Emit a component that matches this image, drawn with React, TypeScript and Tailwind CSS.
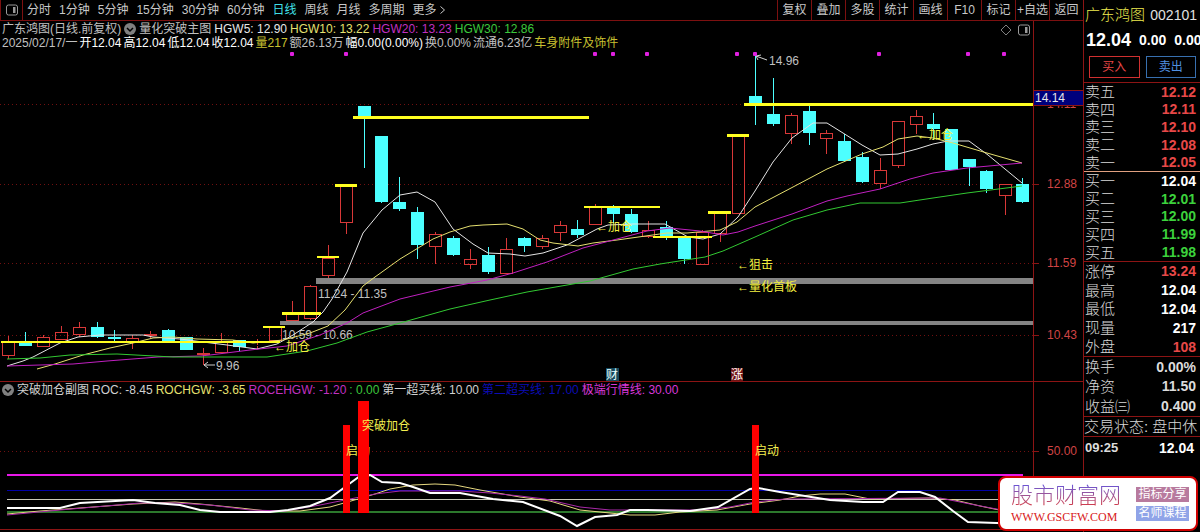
import { clsx } from "clsx";

// x, high, body top, body bottom, low, rising
type Candle = [number, number, number, number, number, boolean];

const candles: Candle[] = [
    [8, 336, 342, 356, 359, true],
    [25, 332, 342, 346, 346, false],
    [43, 335, 337, 347, 347, true],
    [61, 326, 332, 340, 340, true],
    [79, 322, 327, 335, 337, true],
    [97, 322, 327, 337, 338, false],
    [114, 330, 337, 339, 341, false],
    [132, 335, 338, 343, 349, true],
    [150, 331, 334, 336, 339, true],
    [168, 329, 330, 341, 341, false],
    [186, 337, 337, 350, 350, false],
    [203, 348, 353, 355, 365, true],
    [221, 333, 342, 353, 353, true],
    [239, 340, 340, 347, 351, false],
    [257, 339, 345, 346, 349, true],
    [275, 327, 327, 341, 341, true],
    [292, 301, 313, 321, 321, true],
    [310, 285, 286, 319, 320, true],
    [328, 245, 258, 276, 278, true],
    [346, 186, 186, 223, 234, true],
    [364, 106, 106, 116, 168, false],
    [381, 136, 136, 202, 203, false],
    [399, 177, 202, 209, 211, false],
    [417, 207, 212, 245, 259, false],
    [435, 232, 234, 247, 264, true],
    [453, 236, 238, 255, 256, false],
    [470, 249, 259, 265, 269, true],
    [488, 247, 255, 272, 274, false],
    [506, 238, 249, 274, 274, true],
    [524, 237, 238, 246, 252, false],
    [542, 235, 238, 247, 249, true],
    [560, 221, 225, 233, 241, true],
    [577, 220, 229, 235, 238, false],
    [595, 204, 207, 225, 225, true],
    [613, 205, 207, 214, 223, false],
    [631, 209, 214, 232, 233, false],
    [648, 221, 230, 237, 238, true],
    [666, 221, 227, 237, 240, false],
    [684, 238, 238, 259, 264, false],
    [702, 230, 232, 265, 265, true],
    [720, 213, 213, 234, 242, true],
    [738, 136, 136, 214, 214, true],
    [755, 55, 96, 103, 125, false],
    [773, 78, 114, 124, 126, false],
    [791, 113, 115, 134, 144, true],
    [809, 105, 111, 133, 145, false],
    [826, 130, 133, 139, 154, true],
    [844, 134, 141, 161, 161, false],
    [862, 152, 157, 182, 183, false],
    [880, 158, 170, 184, 189, true],
    [898, 121, 121, 166, 168, true],
    [916, 110, 116, 125, 134, true],
    [933, 113, 124, 129, 140, false],
    [951, 129, 129, 170, 170, false],
    [969, 159, 159, 167, 186, false],
    [986, 170, 171, 189, 193, false],
    [1005, 184, 184, 196, 215, true],
    [1022, 178, 184, 202, 203, false],
];

// x1, x2, y, thickness
const levels = [
    [1, 280, 341, 2],
    [263, 285, 326, 2],
    [282, 321, 312, 3],
    [317, 339, 256, 2],
    [335, 357, 184, 3],
    [353, 589, 116, 3],
    [584, 660, 206, 2],
    [653, 712, 236, 2],
    [708, 731, 211, 3],
    [727, 749, 134, 3],
    [744, 1033, 103, 3],
];

const averages = [
    {
        stroke: "#e4e4e4",
        points: "7,366 23,361 33,357 60,343 78,337 100,335 143,335 153,337 180,339 203,342 227,345 257,349 277,344 293,335 313,322 323,312 332,299 347,272 363,233 382,210 400,195 417,192 435,202 453,229 473,244 488,253 510,254 525,256 543,253 567,245 597,229 608,225 633,224 665,224 688,237 703,239 720,234 738,217 755,191 773,162 792,138 813,123 827,123 843,133 862,145 880,155 898,154 917,149 933,144 948,141 969,141 988,155 1022,183",
    },
    {
        stroke: "#e6e070",
        points: "37,369 55,364 83,355 110,348 133,343 153,338 173,337 197,339 233,340 253,343 283,340 310,333 328,326 345,310 363,286 375,277 400,259 433,239 450,232 470,226 483,225 507,224 523,229 540,240 553,243 578,246 593,243 617,240 667,233 687,233 720,230 737,222 755,207 793,187 827,169 862,154 883,147 898,139 917,136 933,138 953,143 987,153 1022,163",
    },
    {
        stroke: "#c020c0",
        points: "7,366 73,364 107,361 158,357 200,356 210,355 250,350 287,346 320,335 347,323 363,313 400,299 450,287 487,280 513,273 547,262 583,248 617,239 647,231 670,228 700,231 723,235 738,232 755,226 792,214 827,201 847,196 880,189 910,179 933,173 967,168 1000,165 1022,163",
    },
    {
        stroke: "#32c832",
        points: "7,359 40,358 70,355 117,354 173,357 267,357 307,351 337,343 367,332 400,323 450,309 490,300 527,292 590,281 633,269 660,264 705,257 723,251 755,237 793,220 827,210 860,203 900,203 933,198 967,193 1022,186",
    },
];

const signals = [
    { x: 274, y: 351, text: "←加仓" },
    { x: 596, y: 231, text: "←加仓" },
    { x: 917, y: 139, text: "←加仓" },
    { x: 737, y: 269, text: "←狙击" },
    { x: 737, y: 291, text: "←量化首板" },
];

const priceTicks = [
    { y: 104, label: "14.11" },
    { y: 184, label: "12.88" },
    { y: 263, label: "11.59" },
    { y: 335, label: "10.43" },
];

const dots = [292, 346, 595, 613, 647, 737, 755, 879, 968, 1004];

const periods = ["分时", "1分钟", "5分钟", "15分钟", "30分钟", "60分钟", "日线", "周线", "月线", "多周期"];
const tools = ["复权", "叠加", "多股", "统计", "画线", "F10", "标记", "+自选", "返回"];

const red = "text-[#e84848]";
const green = "text-[#3cd23c]";
const white = "text-white";
const silver = "text-[#dcdcdc]";

const asks = [
    ["卖五", "12.12", red],
    ["卖四", "12.11", red],
    ["卖三", "12.10", red],
    ["卖二", "12.08", red],
    ["卖一", "12.05", red],
];

const bids = [
    ["买一", "12.04", white],
    ["买二", "12.01", green],
    ["买三", "12.00", green],
    ["买四", "11.99", green],
    ["买五", "11.98", green],
];

const stats = [
    ["涨停", "13.24", red],
    ["最高", "12.04", white],
    ["最低", "12.04", white],
    ["现量", "217", white],
    ["外盘", "108", red],
];

const finance = [
    ["换手", "0.00%", silver],
    ["净资", "11.50", silver],
    ["收益㈢", "0.400", silver],
];

function PanelIcon() {
    return (
        <svg className="size-3 shrink-0" viewBox="0 0 12 12" fill="none" stroke="#9a9a9a">
            <rect x="0.5" y="1" width="11" height="10" rx="2" />
            <rect x="7" y="3" width="2.5" height="6" fill="#9a9a9a" stroke="none" />
        </svg>
    );
}

function CollapseIcon() {
    return (
        <svg className="size-3 shrink-0" viewBox="0 0 12 12" fill="none">
            <circle cx="6" cy="6" r="6" fill="#808080" />
            <path d="M3 5l3 3 3-3" stroke="#000" strokeWidth="1.5" />
        </svg>
    );
}

function Toolbar() {
    return (
        <nav className="flex h-[21px] items-stretch justify-between border-b border-[#7c1010] text-[#c8c8c8]">
            <div className="flex items-center gap-2">
                <button aria-label="侧栏" className="-mr-1 flex h-full w-[23px] items-center justify-center border-x border-[#7c1010]">
                    <PanelIcon />
                </button>
                {periods.map((period) => (
                    <button key={period} className={clsx("whitespace-nowrap", period === "日线" && "text-[#40e0e8]")}>
                        {period}
                    </button>
                ))}
                <button className="flex items-center gap-[3px] whitespace-nowrap">
                    更多
                    <svg className="h-2 w-[5px]" viewBox="0 0 5 8" fill="none" stroke="currentColor">
                        <path d="M0.5 0.5L4.5 4L0.5 7.5" />
                    </svg>
                </button>
            </div>
            <div className="flex">
                {tools.map((tool) => (
                    <button key={tool} className="w-[34px] whitespace-nowrap border-l border-[#7c1010]">
                        {tool}
                    </button>
                ))}
            </div>
        </nav>
    );
}

function ChartHeader() {
    return (
        <header className="grid grid-cols-[1033fr_50fr]">
            <div className="flex items-start justify-between pt-px">
                <div className="whitespace-nowrap pl-[2px] leading-[14px] text-[#c0c0c0]">
                    <h1 className="flex items-center gap-[3px]">
                        <span>广东鸿图(日线.前复权)</span>
                        <CollapseIcon />
                        <span>量化突破主图</span>
                        <span className="text-[#e8e8e8]">HGW5: 12.90</span>
                        <span className="text-[#e6e070]">HGW10: 13.22</span>
                        <span className="text-[#c030c0]">HGW20: 13.23</span>
                        <span className="text-[#3cc83c]">HGW30: 12.86</span>
                    </h1>
                    <p className="flex gap-[2px]">
                        <span>2025/02/17/一</span>
                        <span className="text-white">开12.04</span>
                        <span className="text-white">高12.04</span>
                        <span className="text-white">低12.04</span>
                        <span className="text-white">收12.04</span>
                        <span className="text-[#c8c030]">量217</span>
                        <span>额26.13万</span>
                        <span className="text-white">幅0.00(0.00%)</span>
                        <span>换0.00%</span>
                        <span>流通6.23亿</span>
                        <span className="text-[#c8c030]">车身附件及饰件</span>
                    </p>
                </div>
                <div className="flex items-center gap-[6px] pr-[3px] pt-[2px]">
                    <svg className="size-3" viewBox="0 0 12 12" fill="none" stroke="#808080">
                        <path d="M6 1l5 5-5 5-5-5z" />
                    </svg>
                    <PanelIcon />
                </div>
            </div>
            <div className="border-l border-[#8c1414]" />
        </header>
    );
}

function PriceChart() {
    return (
        <svg className="block w-full text-xs" viewBox="0 50 1083 331">
            <g shapeRendering="crispEdges">
                {priceTicks.map((tick) => (
                    <g key={tick.y} stroke="#8c1414">
                        <line x1="0" x2="1033" y1={tick.y + 0.5} y2={tick.y + 0.5} stroke="#701010" strokeDasharray="1 3" />
                        <line x1="1033" x2="1039" y1={tick.y + 0.5} y2={tick.y + 0.5} />
                    </g>
                ))}
                <rect x="316" y="278" width="717" height="6" fill="#848484" />
                <rect x="280" y="321" width="753" height="4" fill="#848484" />
            </g>
            <g fill="#c0c0c0">
                <text x="318" y="298">11.24 - 11.35</text>
                <text x="282" y="339">10.59 - 10.66</text>
                <text x="216" y="370">9.96</text>
                <text x="769" y="65">14.96</text>
            </g>
            <path d="M204 365h11M204 365l4-3M204 365l4 3M756 56l11 4M756 56l5-1M756 56l2 4" stroke="#d0d0d0" fill="none" />
            <g shapeRendering="crispEdges">
                {candles.map(([x, high, top, bottom, low, rising]) =>
                    rising ? (
                        <g key={x} stroke="#d83838" fill="none">
                            <path d={`M${x + 0.5} ${high}V${top}M${x + 0.5} ${bottom}V${low}`} />
                            <rect x={x - 5.5} y={top + 0.5} width="12" height={bottom - top - 1} />
                        </g>
                    ) : (
                        <g key={x} fill="#4cffff">
                            <rect x={x} y={high} width="1" height={low - high} />
                            <rect x={x - 6} y={top} width="13" height={bottom - top} />
                        </g>
                    )
                )}
            </g>
            <g fill="none">
                {averages.map((line) => (
                    <polyline key={line.stroke} points={line.points} stroke={line.stroke} />
                ))}
            </g>
            <g fill="#ffff20" shapeRendering="crispEdges">
                {levels.map(([x1, x2, y, height]) => (
                    <rect key={x1} x={x1} y={y} width={x2 - x1} height={height} />
                ))}
            </g>
            <g fill="#f4f040">
                {signals.map((signal) => (
                    <text key={signal.x + "-" + signal.y} x={signal.x} y={signal.y}>{signal.text}</text>
                ))}
            </g>
            <g fill="#e020e0">
                {dots.map((x) => (
                    <rect key={x} x={x - 2} y="52" width="4" height="4" rx="1" />
                ))}
            </g>
            <rect x="606" y="368" width="13" height="13" fill="#14485c" />
            <text x="606" y="379" fill="#e8ffff">财</text>
            <rect x="731" y="368" width="12" height="13" fill="#701414" />
            <text x="731" y="379" fill="#fff">涨</text>

            {/* price axis */}
            <line x1="1033.5" x2="1033.5" y1="50" y2="381" stroke="#8c1414" />
            <g fill="#d04444">
                {priceTicks.map((tick) => (
                    <text key={tick.y} x="1047" y={tick.y + 4}>{tick.label}</text>
                ))}
            </g>
            <rect x="1033.5" y="90.5" width="50" height="15" fill="#00007c" stroke="#8c1414" />
            <text x="1035" y="102" fill="#e8e8e8">14.14</text>
        </svg>
    );
}

function SubHeader() {
    return (
        <header className="grid grid-cols-[1033fr_50fr] border-t border-[#8c1414]">
            <h2 className="flex items-center gap-[3px] whitespace-nowrap pl-[2px] leading-4 text-[#d0d0d0]">
                <CollapseIcon />
                <span>突破加仓副图</span>
                <span>ROC: -8.45</span>
                <span className="text-[#e6e070]">ROCHGW: -3.65</span>
                <span className="text-[#c030c0]">ROCEHGW: -1.20</span>
                <span className="text-[#3cc83c]">: 0.00</span>
                <span>第一超买线: 10.00</span>
                <span className="text-[#0c0cb4]">第二超买线: 17.00</span>
                <span className="text-[#d838d8]">极端行情线: 30.00</span>
            </h2>
            <div className="border-l border-[#8c1414]" />
        </header>
    );
}

function RocChart() {
    return (
        <svg className="block w-full border-b border-[#8c1414] text-xs" viewBox="0 398 1083 131">
            <g shapeRendering="crispEdges">
                <line x1="0" x2="1033" y1="451.5" y2="451.5" stroke="#701010" strokeDasharray="1 3" />
                <line x1="1033" x2="1039" y1="451.5" y2="451.5" stroke="#8c1414" />
                <rect x="7" y="474" width="1016" height="2" fill="#e818e8" />
                <rect x="7" y="490" width="1016" height="1" fill="#0000a8" />
                <rect x="7" y="499" width="1016" height="1" fill="#c8c8b8" />
                <rect x="7" y="511" width="1016" height="2" fill="#2c782c" />
            </g>
            <g fill="none">
                <polyline
                    stroke="#e6d880"
                    points="7,514 40,511 80,508 133,504 175,502 200,504 240,508 267,511 300,511 330,507 358,499 375,494 390,489 413,485 435,484 455,485 480,490 520,497 550,501 580,510 600,512 630,515 655,515 680,512 717,510 750,504 780,500 800,496 820,494 845,494 870,499 930,498 955,500 980,506 1023,515"
                />
                <polyline
                    stroke="#a828a8"
                    points="7,515 60,510 140,503 175,503 210,505 250,510 285,511 320,505 350,499 375,494 400,491 460,491 490,493 520,496 545,499 580,507 610,510 700,510 730,507 755,502 785,499 940,498 970,504 1023,514"
                />
                <polyline
                    stroke="#fff"
                    strokeWidth="2"
                    points="7,508 60,508 80,503 133,500 155,503 180,505 200,510 220,512 270,512 288,510 310,506 330,498 345,487 360,476 370,475 382,482 400,483 413,487 430,493 460,493 493,499 523,502 560,516 577,526 595,517 617,515 630,510 647,510 690,511 718,507 750,489 758,488 780,492 830,500 863,502 883,502 898,492 920,492 935,497 953,511 968,522 1023,524"
                />
            </g>
            <rect x="343" y="425" width="7" height="88" fill="#f00" />
            <rect x="752" y="425" width="7" height="88" fill="#f00" />
            <g fill="#f4f050">
                <text x="346" y="455">启动</text>
                <text x="755" y="455">启动</text>
            </g>
            <rect x="358" y="401" width="11" height="112" fill="#f00" />
            <text x="362" y="430" fill="#f4f050">突破加仓</text>
            <line x1="1033.5" x2="1033.5" y1="398" y2="529" stroke="#8c1414" />
            <text x="1047" y="455" fill="#d04444">50.00</text>
        </svg>
    );
}

function QuoteTable({ rows, className }: { rows: string[][]; className: string }) {
    return (
        <table className={clsx("w-full border-b leading-none", className)}>
            <tbody>
                {rows.map(([label, value, color]) => (
                    <tr key={label}>
                        <th scope="row" className="p-0 text-left text-[15px] font-light text-[#d8d8d8]">{label}</th>
                        <td className={clsx("p-0 text-right text-sm leading-none font-bold", color)}>{value}</td>
                    </tr>
                ))}
            </tbody>
        </table>
    );
}

function QuotePanel() {
    return (
        <aside className="w-[117px] shrink-0 overflow-hidden whitespace-nowrap border-l border-[#8c1414]">
            <div className="border-b border-[#8c1414] pb-1 pl-px">
                <div className="flex items-center justify-between pt-1 pr-[3px] leading-[22px]">
                    <h2 className="text-[15px] font-light text-[#f0ec50]">广东鸿图</h2>
                    <span className="text-sm leading-[22px] text-[#e0e0e0]">002101</span>
                </div>
                <div className="flex items-center gap-2 pl-px text-sm leading-[28px] font-bold text-white">
                    <span className="text-lg leading-[28px]">12.04</span>
                    <span>0.00</span>
                    <span>0.00</span>
                </div>
                <div className="grid grid-cols-2 gap-[6px] pt-[2px] pr-1 pl-1">
                    <button className="h-[22px] border border-[#d03030] text-[#e84848]">买入</button>
                    <button className="h-[22px] border border-[#3870b0] text-[#5090e0]">卖出</button>
                </div>
            </div>
            <div className="[&_td]:pr-1 [&_th]:pl-px">
                <QuoteTable rows={asks} className="h-[89px] border-[#e0a080]" />
                <QuoteTable rows={bids} className="h-[90px] border-[#8c1414]" />
                <QuoteTable rows={stats} className="h-[95px] border-[#8c1414]" />
                <QuoteTable rows={finance} className="h-[60px] border-[#8c1414]" />
            </div>
            <p className="border-b border-[#8c1414] text-[15px] leading-[19px] font-light text-[#d8d8d8]">交易状态: 盘中休</p>
            <div className="flex justify-between pr-[6px] pl-px text-sm leading-[22px] font-bold">
                <span className="text-[13px] leading-[22px] text-[#dcdcdc]">09:25</span>
                <span className="text-white">12.04</span>
            </div>
        </aside>
    );
}

function SiteBadge() {
    return (
        <a
            href="#"
            className="absolute right-[2px] bottom-px flex h-[55px] w-[200px] items-center justify-between rounded-lg border-2 border-[#d00000] bg-white pr-[7px] pl-[11px]"
        >
            <span className="flex flex-col whitespace-nowrap">
                <span className="bg-linear-to-b from-[#6050e0] to-[#e02020] bg-clip-text text-[22px] leading-[26px] font-light text-transparent">股市财富网</span>
                <span className="font-['Liberation_Serif',serif] text-xs leading-4 text-[#d82020]">WWW.GSCFW.COM</span>
            </span>
            <span className="flex flex-col gap-1 text-center text-xs leading-[15px] text-white">
                <span className="w-[53px] bg-[#b87a9e]">指标分享</span>
                <span className="w-[53px] bg-[#90a4e8]">名师课程</span>
            </span>
        </a>
    );
}

export default function App() {
    return (
        <div className="relative flex min-h-screen bg-black font-['Liberation_Sans','Noto_Sans_CJK_SC',sans-serif] text-xs">
            <main className="min-w-0 flex-1">
                <Toolbar />
                <ChartHeader />
                <PriceChart />
                <SubHeader />
                <RocChart />
            </main>
            <QuotePanel />
            <SiteBadge />
        </div>
    );
}
